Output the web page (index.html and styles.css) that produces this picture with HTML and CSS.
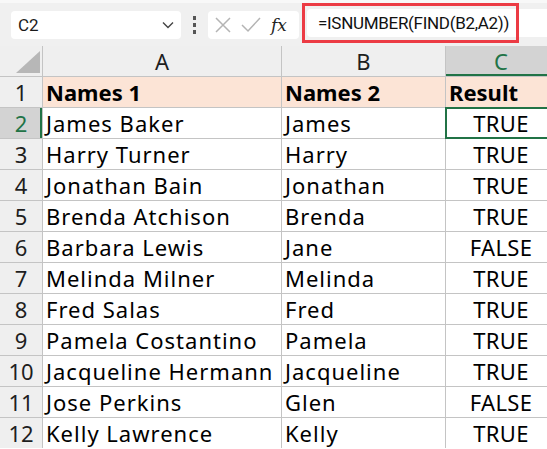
FILE: index.html
```html
<!DOCTYPE html>
<html lang="en">
<head>
  <meta charset="UTF-8">
  <title>ISNUMBER FIND</title>
  <link rel="stylesheet" href="styles.css">
</head>
<body>
  <div class="formula-bar">
    <div class="name-box">
      <span>C2</span>
      <svg class="chevron" width="12" height="8" viewBox="0 0 12 8"><path d="M1 1.5 L6 6.5 L11 1.5" fill="none" stroke="#444" stroke-width="1.4"/></svg>
    </div>
    <div class="dots"><i></i><i></i><i></i></div>
    <div class="fx-box">
      <svg width="18" height="18" viewBox="0 0 18 18"><path d="M2 2 L16 16 M16 2 L2 16" stroke="#b4b4b4" stroke-width="1.5" fill="none"/></svg>
      <svg width="20" height="18" viewBox="0 0 20 18"><path d="M1 9 L7 15 L19 2" stroke="#b4b4b4" stroke-width="1.5" fill="none"/></svg>
      <span class="fx">fx</span>
    </div>
    <div class="formula-wrap">
      <div class="formula">=ISNUMBER(FIND(B2,A2))</div>
    </div>
    <div class="formula-rest"></div>
  </div>

  <div class="sheet">
    <div class="corner"><span class="tri"></span></div>
    <div class="col-head">A</div>
    <div class="col-head">B</div>
    <div class="col-head sel">C</div>

    <div class="row-head">1</div>
    <div class="cell title">Names 1</div>
    <div class="cell title">Names 2</div>
    <div class="cell title">Result</div>

    <div class="row-head sel">2</div>
    <div class="cell">James Baker</div>
    <div class="cell">James</div>
    <div class="cell bool active">TRUE</div>

    <div class="row-head">3</div>
    <div class="cell">Harry Turner</div>
    <div class="cell">Harry</div>
    <div class="cell bool">TRUE</div>

    <div class="row-head">4</div>
    <div class="cell">Jonathan Bain</div>
    <div class="cell">Jonathan</div>
    <div class="cell bool">TRUE</div>

    <div class="row-head">5</div>
    <div class="cell">Brenda Atchison</div>
    <div class="cell">Brenda</div>
    <div class="cell bool">TRUE</div>

    <div class="row-head">6</div>
    <div class="cell">Barbara Lewis</div>
    <div class="cell">Jane</div>
    <div class="cell bool">FALSE</div>

    <div class="row-head">7</div>
    <div class="cell">Melinda Milner</div>
    <div class="cell">Melinda</div>
    <div class="cell bool">TRUE</div>

    <div class="row-head">8</div>
    <div class="cell">Fred Salas</div>
    <div class="cell">Fred</div>
    <div class="cell bool">TRUE</div>

    <div class="row-head">9</div>
    <div class="cell">Pamela Costantino</div>
    <div class="cell">Pamela</div>
    <div class="cell bool">TRUE</div>

    <div class="row-head">10</div>
    <div class="cell">Jacqueline Hermann</div>
    <div class="cell">Jacqueline</div>
    <div class="cell bool">TRUE</div>

    <div class="row-head">11</div>
    <div class="cell">Jose Perkins</div>
    <div class="cell">Glen</div>
    <div class="cell bool">FALSE</div>

    <div class="row-head">12</div>
    <div class="cell">Kelly Lawrence</div>
    <div class="cell">Kelly</div>
    <div class="cell bool">TRUE</div>
  </div>
</body>
</html>
```

FILE: styles.css
```css
body {
  margin: 0;
  width: 547px;
  height: 449px;
  overflow: hidden;
  background: #fff;
  font-family: "Noto Sans", sans-serif;
  color: #000;
}

/* formula bar */
.formula-bar {
  height: 46px;
  background: #f0f0f0;
  border-top: 3px solid #f8f8f8;
  box-sizing: border-box;
  display: flex;
  align-items: center;
  padding-left: 11px;
  font-family: Roboto, sans-serif;
}

.name-box {
  width: 170px;
  height: 28px;
  background: #fff;
  border-radius: 4px;
  display: flex;
  align-items: center;
  justify-content: space-between;
  padding: 0 6px 0 7px;
  box-sizing: border-box;
  font-size: 17px;
  color: #1a1a1a;
}

.chevron {
  margin-right: 1px;
}

.dots {
  width: 27px;
  display: flex;
  flex-direction: column;
  align-items: center;
  gap: 3px;
}

.dots i {
  width: 3px;
  height: 4px;
  background: #555;
}

.fx-box {
  width: 91px;
  height: 28px;
  background: #fff;
  border-radius: 4px;
  display: flex;
  align-items: center;
  gap: 9px;
  padding-left: 6px;
  box-sizing: border-box;
}

.fx {
  font-family: "DejaVu Serif", serif;
  font-style: italic;
  font-size: 17px;
  color: #222;
  margin-left: 1px;
}

.formula-wrap {
  margin-left: 3px;
  height: 40px;
  width: 217px;
  border: 3px solid #ec3b44;
  box-sizing: border-box;
  padding: 3px 0 3px 2px;
  margin-top: -3px;
}

.formula {
  background: #fff;
  height: 100%;
  border-radius: 4px 0 0 4px;
  font-size: 17px;
  letter-spacing: -0.3px;
  line-height: 28px;
  padding-left: 11px;
  color: #111;
  white-space: nowrap;
}

.formula-rest {
  flex: 1;
  height: 28px;
  background: #fff;
  margin-top: -3px;
}

/* grid */
.sheet {
  display: grid;
  grid-template-columns: 42px 238px 163px 110px;
  grid-auto-rows: 30px;
  gap: 1px;
  background: #c4c4c4;
  font-size: 22px;
  letter-spacing: 1px;
}

.corner,
.col-head,
.row-head {
  background: #efefef;
  display: flex;
  align-items: center;
  justify-content: center;
  color: #1e1e1e;
  font-size: 22px;
  letter-spacing: 0;
}

.corner {
  align-items: flex-end;
  justify-content: flex-end;
  padding: 0 2px 3px 0;
}

.tri {
  width: 24px;
  height: 22px;
  background: #b7b7b7;
  clip-path: polygon(100% 0, 100% 100%, 0 100%);
}

.col-head.sel {
  background: #d3d3d3;
  color: #217346;
  box-shadow: inset 0 -2px #217346;
}

.row-head.sel {
  background: #d3d3d3;
  color: #217346;
  box-shadow: inset -2px 0 #217346;
}

.cell {
  background: #fff;
  display: flex;
  align-items: center;
  padding-left: 3px;
  white-space: nowrap;
}

.cell.title {
  background: #fce4d6;
  font-weight: bold;
  letter-spacing: 0;
}

.cell.bool {
  justify-content: center;
  padding-left: 0;
  letter-spacing: 0.3px;
}

.cell.active {
  outline: 2px solid #217346;
  outline-offset: -1px;
}
```
